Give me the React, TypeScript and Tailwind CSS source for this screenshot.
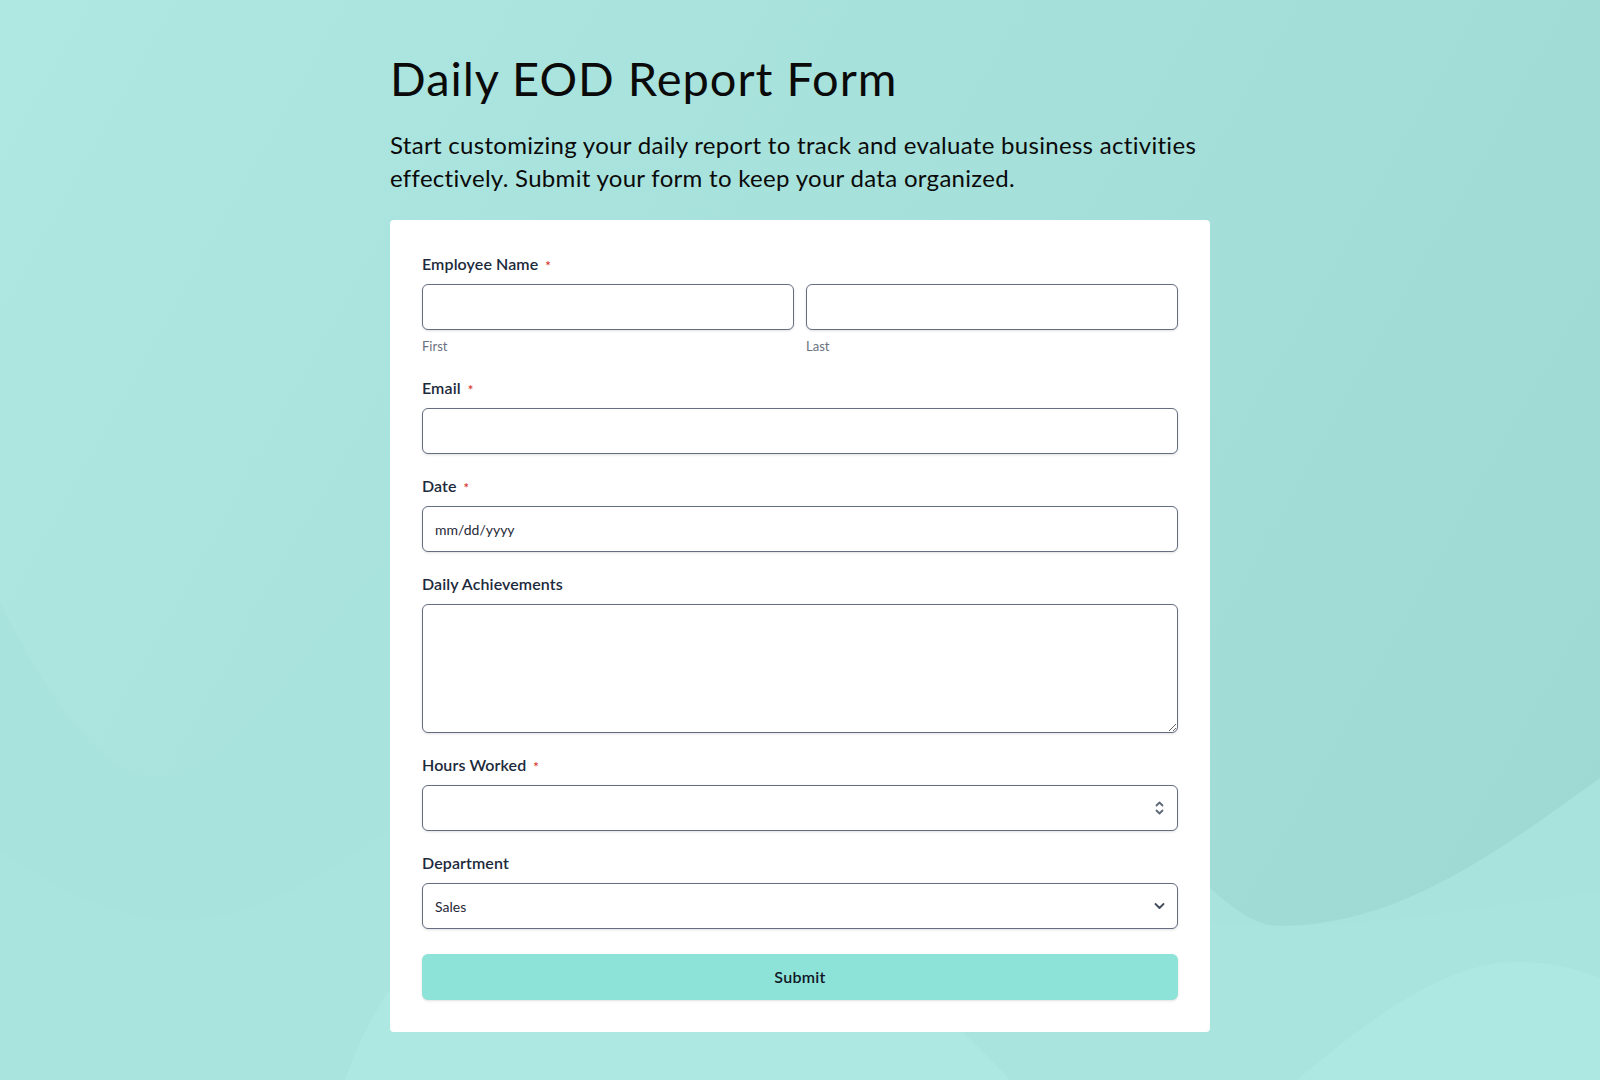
import type { ReactNode } from "react";

function Required() {
  return (
    <span className="ml-[7px] inline-block translate-y-[2px] text-[13px] leading-none text-[#d8352a]">*</span>
  );
}

function Label({ children, required }: { children: ReactNode; required?: boolean }) {
  return (
    <label className="mb-2 flex items-center text-[16px] font-semibold leading-6 tracking-[0.1px] text-[#1c2a3c]">
      {children}
      {required ? <Required /> : null}
    </label>
  );
}

const inputCls =
  "block h-[46px] w-full rounded-md border border-[#646e80] bg-white px-3 text-[14px] text-[#1f2937] shadow-sm outline-none";

function Background() {
  return (
    <svg
      className="absolute inset-0 h-full w-full"
      viewBox="0 0 1600 1080"
      preserveAspectRatio="none"
      aria-hidden="true"
    >
      <defs>
        <linearGradient id="bg" x1="0" y1="0" x2="1600" y2="900" gradientUnits="userSpaceOnUse">
          <stop offset="0" stopColor="#afe8e2" />
          <stop offset="0.45" stopColor="#a7e1db" />
          <stop offset="1" stopColor="#9fd9d3" />
        </linearGradient>
      </defs>
      <rect width="1600" height="1080" fill="url(#bg)" />
      <path
        d="M0 602 C50 700 100 777 158 777 C230 777 300 660 390 550 C600 300 900 700 1210 888 C1240 915 1260 926 1280 926 C1400 926 1500 850 1600 778 L1600 1080 L0 1080 Z"
        fill="#a9e3dd"
      />
      <path
        d="M0 851 C60 890 120 920 173 920 C260 920 330 870 390 829 C700 700 1000 900 1210 923 C1350 935 1480 905 1600 892 L1600 1080 L0 1080 Z"
        fill="#aae4de"
      />
      <path
        d="M345 1080 C380 980 430 930 520 900 C760 860 900 960 1010 1080 Z"
        fill="#aee8e2"
      />
      <path
        d="M1297 1080 C1380 1010 1450 962 1517 962 C1550 962 1580 970 1600 978 L1600 1080 Z"
        fill="#aee8e2"
      />
    </svg>
  );
}

export default function App() {
  return (
    <div className="relative min-h-screen overflow-hidden bg-[#ace6df] font-['Lato',sans-serif]">
      <Background />
      <div className="relative mx-auto w-[820px] pt-[50px] pb-12">
        <h1 className="text-[47px] font-normal leading-[56px] tracking-[1px] text-[#0a0a0a]">
          Daily EOD Report Form
        </h1>
        <p className="mt-[22px] text-[24px] leading-[33px] tracking-[0.3px] text-[#0a0a0a]">
          Start customizing your daily report to track and evaluate business activities effectively.
          Submit your form to keep your data organized.
        </p>

        <form className="mt-[26px] flex flex-col gap-5 rounded bg-white p-8" onSubmit={(e) => e.preventDefault()}>
          <div>
            <Label required>Employee Name</Label>
            <div className="grid grid-cols-2 gap-3">
              <div>
                <input className={inputCls} />
                <div className="mt-1.5 text-[13px] leading-5 text-[#6b7280]">First</div>
              </div>
              <div>
                <input className={inputCls} />
                <div className="mt-1.5 text-[13px] leading-5 text-[#6b7280]">Last</div>
              </div>
            </div>
          </div>

          <div>
            <Label required>Email</Label>
            <input type="email" className={inputCls} />
          </div>

          <div>
            <Label required>Date</Label>
            <input placeholder="mm/dd/yyyy" className={`${inputCls} placeholder:text-[#1f2937]`} />
          </div>

          <div>
            <Label>Daily Achievements</Label>
            <textarea className="block h-[129px] w-full rounded-md border border-[#646e80] bg-white px-3 py-2 text-[14px] text-[#1f2937] shadow-sm outline-none" />
          </div>

          <div>
            <Label required>Hours Worked</Label>
            <div className="relative">
              <input className={inputCls} />
              <svg
                className="pointer-events-none absolute right-[14px] top-1/2 h-[16px] w-[9px] -translate-y-1/2"
                viewBox="0 0 9 16"
                fill="none"
                stroke="#5d6878"
                strokeWidth="1.8"
                strokeLinecap="round"
                strokeLinejoin="round"
              >
                <path d="M1.5 5.5 L4.5 2.5 L7.5 5.5" />
                <path d="M1.5 10.5 L4.5 13.5 L7.5 10.5" />
              </svg>
            </div>
          </div>

          <div>
            <Label>Department</Label>
            <div className="relative">
              <select defaultValue="Sales" className={`${inputCls} appearance-none`}>
                <option>Sales</option>
                <option>Marketing</option>
                <option>Operations</option>
                <option>Support</option>
              </select>
              <svg
                className="pointer-events-none absolute right-[13px] top-1/2 h-[8px] w-[11px] -translate-y-1/2"
                viewBox="0 0 11 8"
                fill="none"
                stroke="#3f4a5a"
                strokeWidth="1.8"
                strokeLinecap="round"
                strokeLinejoin="round"
              >
                <path d="M1.5 2 L5.5 6 L9.5 2" />
              </svg>
            </div>
          </div>

          <button
            type="submit"
            className="mt-[5px] h-[46px] w-full rounded-md bg-[#8ee3d8] text-[16px] font-semibold tracking-[0.3px] text-[#111827] shadow-sm"
          >
            Submit
          </button>
        </form>
      </div>
    </div>
  );
}
